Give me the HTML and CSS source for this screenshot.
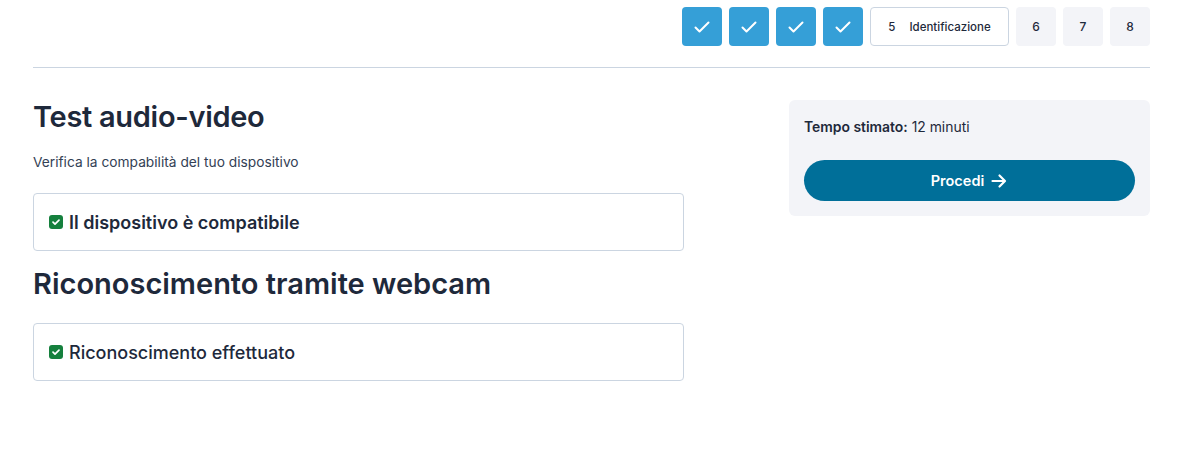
FILE: index.html
```html
<!DOCTYPE html>
<html lang="it">
<head>
<meta charset="utf-8">
<title>Test audio-video</title>
<link rel="stylesheet" href="styles.css">
</head>
<body>
<div class="page">
  <nav class="steps">
    <div class="step done"><svg viewBox="0 0 18 18" width="18" height="18"><path d="M2.5 9.5l4 4 9-9" fill="none" stroke="#fff" stroke-width="2" stroke-linecap="round" stroke-linejoin="round"/></svg></div>
    <div class="step done"><svg viewBox="0 0 18 18" width="18" height="18"><path d="M2.5 9.5l4 4 9-9" fill="none" stroke="#fff" stroke-width="2" stroke-linecap="round" stroke-linejoin="round"/></svg></div>
    <div class="step done"><svg viewBox="0 0 18 18" width="18" height="18"><path d="M2.5 9.5l4 4 9-9" fill="none" stroke="#fff" stroke-width="2" stroke-linecap="round" stroke-linejoin="round"/></svg></div>
    <div class="step done"><svg viewBox="0 0 18 18" width="18" height="18"><path d="M2.5 9.5l4 4 9-9" fill="none" stroke="#fff" stroke-width="2" stroke-linecap="round" stroke-linejoin="round"/></svg></div>
    <div class="step current"><span class="num">5</span><span>Identificazione</span></div>
    <div class="step todo">6</div>
    <div class="step todo">7</div>
    <div class="step todo">8</div>
  </nav>
  <hr class="divider">
  <div class="layout">
    <main class="main">
      <h1 class="title">Test audio-video</h1>
      <p class="subtitle">Verifica la compabilità del tuo dispositivo</p>
      <div class="card">
        <span class="check"><svg viewBox="0 0 14 14" width="14" height="14"><path d="M4 7.2l2 2 4-4" fill="none" stroke="#fff" stroke-width="1.7" stroke-linecap="round" stroke-linejoin="round"/></svg></span>
        <span class="card-text strong">Il dispositivo è compatibile</span>
      </div>
      <h2 class="title second">Riconoscimento tramite webcam</h2>
      <div class="card">
        <span class="check"><svg viewBox="0 0 14 14" width="14" height="14"><path d="M4 7.2l2 2 4-4" fill="none" stroke="#fff" stroke-width="1.7" stroke-linecap="round" stroke-linejoin="round"/></svg></span>
        <span class="card-text">Riconoscimento effettuato</span>
      </div>
    </main>
    <aside class="panel">
      <p class="time"><b>Tempo stimato:</b> 12 minuti</p>
      <button class="btn">Procedi <svg viewBox="0 0 18 18" width="18" height="18"><path d="M2.5 9h12M9.5 3.5L15 9l-5.5 5.5" fill="none" stroke="#fff" stroke-width="2.2" stroke-linecap="round" stroke-linejoin="round"/></svg></button>
    </aside>
  </div>
</div>
</body>
</html>
```
FILE: styles.css
```css
* { box-sizing: border-box; }
body {
  margin: 0;
  background: #fff;
  font-family: "Inter", "Lato", "Liberation Sans", sans-serif;
  color: #1e293b;
}
.page {
  padding: 7px 30px 0 33px;
}
.steps {
  display: flex;
  justify-content: flex-end;
  gap: 7px;
}
.step {
  height: 39px;
  min-width: 40px;
  border-radius: 4px;
  display: flex;
  align-items: center;
  justify-content: center;
  font-size: 12px;
  font-weight: 500;
  color: #1e293b;
}
.step.done { background: #359fd7; }
.step.current {
  width: 139px;
  background: #fff;
  border: 1px solid #cbd5e1;
  gap: 14px;
  font-size: 11.5px;
}
.step.todo { background: #f3f4f8; width: 40px; }
.divider {
  margin: 21px 0 0;
  border: 0;
  border-top: 1px solid #cbd5e1;
}
.layout {
  display: grid;
  grid-template-columns: 651px 1fr;
  gap: 105px;
  margin-top: 32px;
  align-items: start;
}
.title {
  margin: 0;
  font-size: 29px;
  font-weight: 600;
  line-height: 34px;
  color: #1e293b;
}
.title:first-child { letter-spacing: -0.3px; }
.subtitle {
  margin: 19px 0 0;
  font-size: 13.75px;
  line-height: 18px;
  color: #334155;
}
.card {
  margin-top: 22px;
  height: 58px;
  border: 1px solid #cbd5e1;
  border-radius: 4px;
  display: flex;
  align-items: center;
  gap: 6px;
  padding: 0 15px;
}
.check {
  width: 14px;
  height: 14px;
  border-radius: 3px;
  background: #15803d;
  display: flex;
}
.card-text {
  font-size: 18px;
  font-weight: 500;
  color: #1e293b;
}
.card-text.strong { font-weight: 600; }
.title.second { margin-top: 16px; }
.panel {
  background: #f3f4f8;
  border-radius: 6px;
  padding: 17px 15px 15px;
}
.time {
  margin: 0;
  font-size: 13.9px;
  line-height: 20px;
  color: #1e293b;
}
.time b { font-weight: 600; }
.btn {
  margin-top: 23px;
  width: 100%;
  height: 41px;
  border: 0;
  border-radius: 21px;
  background: #006f99;
  color: #fff;
  font-family: inherit;
  font-size: 14.5px;
  font-weight: 600;
  display: flex;
  align-items: center;
  justify-content: center;
  gap: 6px;
}
```
